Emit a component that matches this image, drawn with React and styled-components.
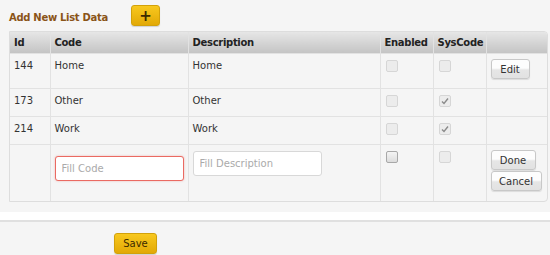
import React from "react";
import styled, { createGlobalStyle } from "styled-components";

const GlobalStyle = createGlobalStyle`
  html, body {
    margin: 0;
    padding: 0;
    background: #f5f5f5;
    font-family: "DejaVu Sans", Verdana, sans-serif;
  }
`;

const Page = styled.div`
  width: 550px;
  height: 255px;
  background: #f5f5f5;
  overflow: hidden;
`;

const TitleBar = styled.div`
  display: flex;
  align-items: center;
  height: 31px;
  padding-left: 9px;
`;

const Title = styled.h3`
  margin: 4px 0 0;
  width: 122px;
  font-size: 10px;
  font-weight: bold;
  color: #8a5418;
  letter-spacing: -0.3px;
`;

const YellowButton = styled.button`
  display: flex;
  align-items: center;
  justify-content: center;
  width: ${p => p.w || 29}px;
  height: 21px;
  padding: 0;
  border: 1px solid #d2a10a;
  border-radius: 3px;
  background: linear-gradient(#f8c81e, #e2a906);
  color: #3b2a00;
  font-family: inherit;
  font-size: ${p => (p.plus ? 15 : 10)}px;
  font-weight: ${p => (p.plus ? "bold" : "normal")};
  box-shadow: 0 1px 1px rgba(0, 0, 0, 0.15);
`;

const TableWrap = styled.div`
  margin-left: 9px;
  width: 537px;
  border: 1px solid #ddd;
  border-radius: 0 4px 4px 0;
  overflow: hidden;
`;

const Table = styled.table`
  width: 100%;
  border-collapse: collapse;
  table-layout: fixed;
  font-size: 10px;
  color: #333;
`;

const Th = styled.th`
  height: 21px;
  padding: 0 4px;
  text-align: left;
  font-size: 10px;
  font-weight: bold;
  color: #222;
  letter-spacing: -0.3px;
  background: linear-gradient(#e6e6e6, #c4c4c4);
  border-left: 1px solid #e2e2e2;
  &:first-child {
    border-left: none;
  }
`;

const Td = styled.td`
  height: ${p => p.h}px;
  padding: 6px 4px 0;
  vertical-align: top;
  border-left: 1px solid #e2e2e2;
  border-top: 1px solid #e2e2e2;
  box-sizing: border-box;
  &:first-child {
    border-left: none;
  }
`;

const Check = styled.span`
  display: block;
  width: 10px;
  height: 10px;
  margin-left: 1px;
  border: 1px solid ${p => (p.active ? "#a8a8a8" : "#d6d6d6")};
  border-radius: 2px;
  background: ${p => (p.active ? "linear-gradient(#f4f4f4, #dcdcdc)" : "#ececec")};
  position: relative;
`;

const Tick = styled.svg`
  position: absolute;
  left: 1px;
  top: 1px;
`;

const GrayButton = styled.button`
  display: block;
  width: ${p => p.w}px;
  height: 20px;
  padding: 0;
  margin: 0;
  border: 1px solid #c8c8c8;
  border-radius: 3px;
  background: linear-gradient(#fdfdfd 45%, #e6e6e6 55%, #e2e2e2);
  color: #333;
  font-family: inherit;
  font-size: 10px;
  box-shadow: 0 1px 1px rgba(0, 0, 0, 0.1);
`;

const Input = styled.input`
  box-sizing: border-box;
  display: block;
  width: 129px;
  height: 25px;
  margin-top: ${p => (p.invalid ? 5 : 0)}px;
  padding: 0 6px;
  border: 1px solid ${p => (p.invalid ? "#ea6a62" : "#d8d8d8")};
  border-radius: 3px;
  background: #fff;
  font-family: inherit;
  font-size: 10px;
  color: #333;
  box-shadow: ${p => (p.invalid ? "0 0 2px rgba(234, 106, 98, 0.5)" : "none")};
  outline: none;
  &::placeholder {
    color: #aaa;
  }
`;

const Stack = styled.div`
  display: flex;
  flex-direction: column;
  gap: 1px;
  margin-top: -1px;
`;

const Footer = styled.div`
  margin-top: 10px;
  height: 8px;
  background: #fff;
  border-bottom: 2px solid #e0e0e0;
`;

const SaveRow = styled.div`
  display: flex;
  padding: 11px 0 0 114px;
`;

const rows = [
  { id: 144, code: "Home", sys: false, edit: true },
  { id: 173, code: "Other", sys: true },
  { id: 214, code: "Work", sys: true },
];

const Box = ({ checked, active }) => (
  <Check active={active}>
    {checked && (
      <Tick width="8" height="8" viewBox="0 0 8 8">
        <path d="M1 4.5 L3 6.5 L7 1.5" stroke="#8a8a8a" strokeWidth="1.4" fill="none" />
      </Tick>
    )}
  </Check>
);

export default function App() {
  return (
    <Page>
      <GlobalStyle />
      <TitleBar>
        <Title>Add New List Data</Title>
        <YellowButton plus>+</YellowButton>
      </TitleBar>
      <TableWrap>
        <Table>
          <colgroup>
            <col style={{ width: 40 }} />
            <col style={{ width: 138 }} />
            <col style={{ width: 192 }} />
            <col style={{ width: 53 }} />
            <col style={{ width: 53 }} />
            <col />
          </colgroup>
          <thead>
            <tr>
              <Th>Id</Th>
              <Th>Code</Th>
              <Th>Description</Th>
              <Th>Enabled</Th>
              <Th>SysCode</Th>
              <Th />
            </tr>
          </thead>
          <tbody>
            {rows.map(r => (
              <tr key={r.id}>
                <Td h={r.edit ? 35 : 28}>{r.id}</Td>
                <Td>{r.code}</Td>
                <Td>{r.code}</Td>
                <Td>
                  <Box />
                </Td>
                <Td>
                  <Box checked={r.sys} />
                </Td>
                <Td>
                  {r.edit && (
                    <GrayButton w={39} style={{ marginTop: -1 }}>
                      Edit
                    </GrayButton>
                  )}
                </Td>
              </tr>
            ))}
            <tr>
              <Td h={56} />
              <Td>
                <Input invalid placeholder="Fill Code" />
              </Td>
              <Td>
                <Input placeholder="Fill Description" />
              </Td>
              <Td>
                <Box active />
              </Td>
              <Td>
                <Box />
              </Td>
              <Td>
                <Stack>
                  <GrayButton w={45}>Done</GrayButton>
                  <GrayButton w={51}>Cancel</GrayButton>
                </Stack>
              </Td>
            </tr>
          </tbody>
        </Table>
      </TableWrap>
      <Footer />
      <SaveRow>
        <YellowButton w={43}>Save</YellowButton>
      </SaveRow>
    </Page>
  );
}
